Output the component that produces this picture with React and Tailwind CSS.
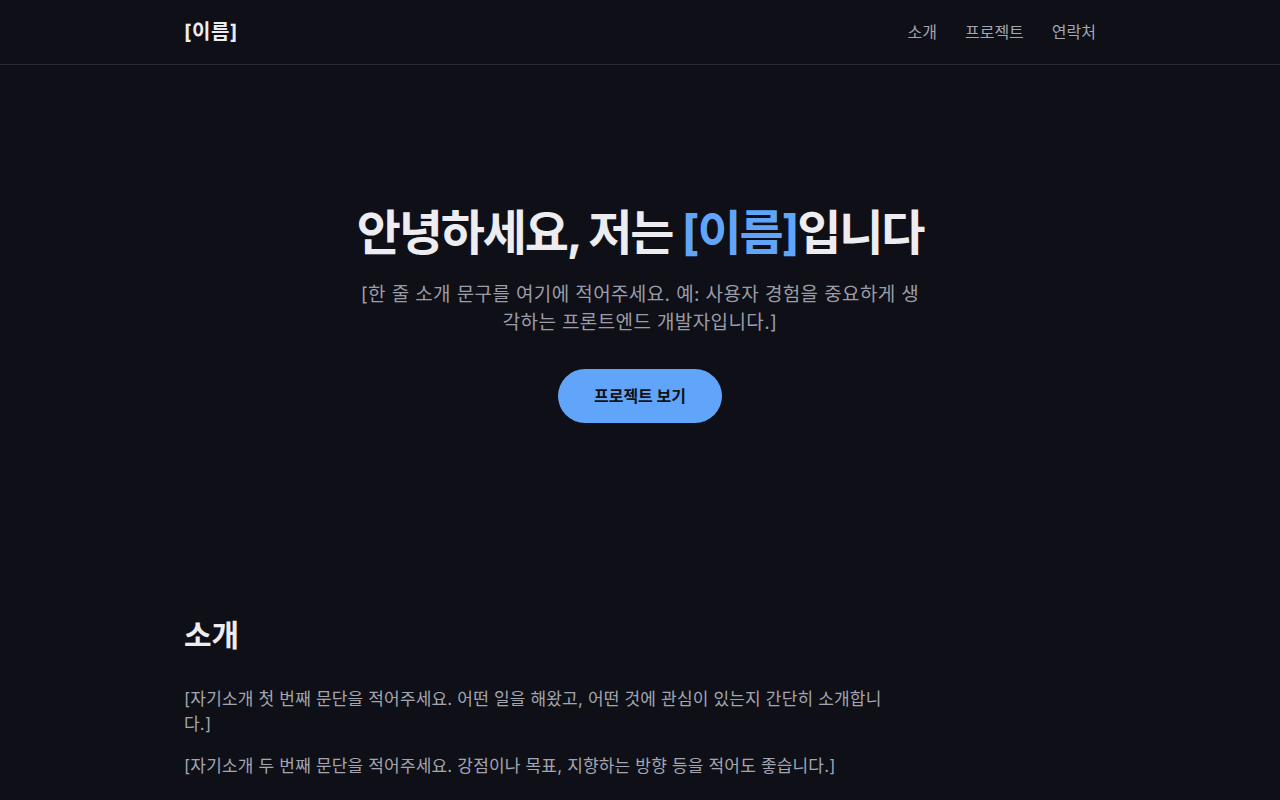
const font = {
  fontFamily: 'Inter, "Noto Sans CJK KR", sans-serif',
};

function Header() {
  return (
    <header className="border-b border-[#2a2b33]">
      <div className="mx-auto flex h-16 max-w-[960px] items-center justify-between px-6">
        <a href="#" className="text-xl font-bold tracking-wide text-[#ececf1]">
          [이름]
        </a>
        <nav className="flex items-center gap-7 text-base text-[#a3a6b1]">
          <a href="#about">소개</a>
          <a href="#projects">프로젝트</a>
          <a href="#contact">연락처</a>
        </nav>
      </div>
    </header>
  );
}

function Hero() {
  return (
    <section className="mx-auto flex max-w-[960px] flex-col items-center px-6 pt-[138px] pb-[136px] text-center">
      <h1 className="text-5xl font-bold leading-[60px] tracking-[-0.045em] text-[#ececf1]">
        안녕하세요, 저는 <span className="text-[#60a5fa]">[이름]</span>입니다
      </h1>
      <p className="mt-[18px] max-w-[562px] text-[19px] leading-7 tracking-[0.02em] text-[#9a9da8]">
        [한 줄 소개 문구를 여기에 적어주세요. 예: 사용자 경험을 중요하게 생각하는
        프론트엔드 개발자입니다.]
      </p>
      <a
        href="#projects"
        className="mt-8 flex h-[54px] w-[164px] items-center justify-center rounded-full bg-[#60a5fa] text-base font-bold text-[#0f1117]"
      >
        프로젝트 보기
      </a>
    </section>
  );
}

function About() {
  return (
    <section id="about" className="mx-auto max-w-[960px] px-6 pt-[58px] pb-8">
      <h2 className="text-3xl font-bold text-[#ececf1]">소개</h2>
      <div className="mt-[34px] max-w-[700px] space-y-[17px] text-[17px] leading-[25px] tracking-[0.01em] text-[#a3a6b1]">
        <p>
          [자기소개 첫 번째 문단을 적어주세요. 어떤 일을 해왔고, 어떤 것에 관심이
          있는지 간단히 소개합니다.]
        </p>
        <p>
          [자기소개 두 번째 문단을 적어주세요. 강점이나 목표, 지향하는 방향 등을
          적어도 좋습니다.]
        </p>
      </div>
    </section>
  );
}

export default function App() {
  return (
    <div className="min-h-screen bg-[#0f1017]" style={font}>
      <Header />
      <Hero />
      <About />
    </div>
  );
}
